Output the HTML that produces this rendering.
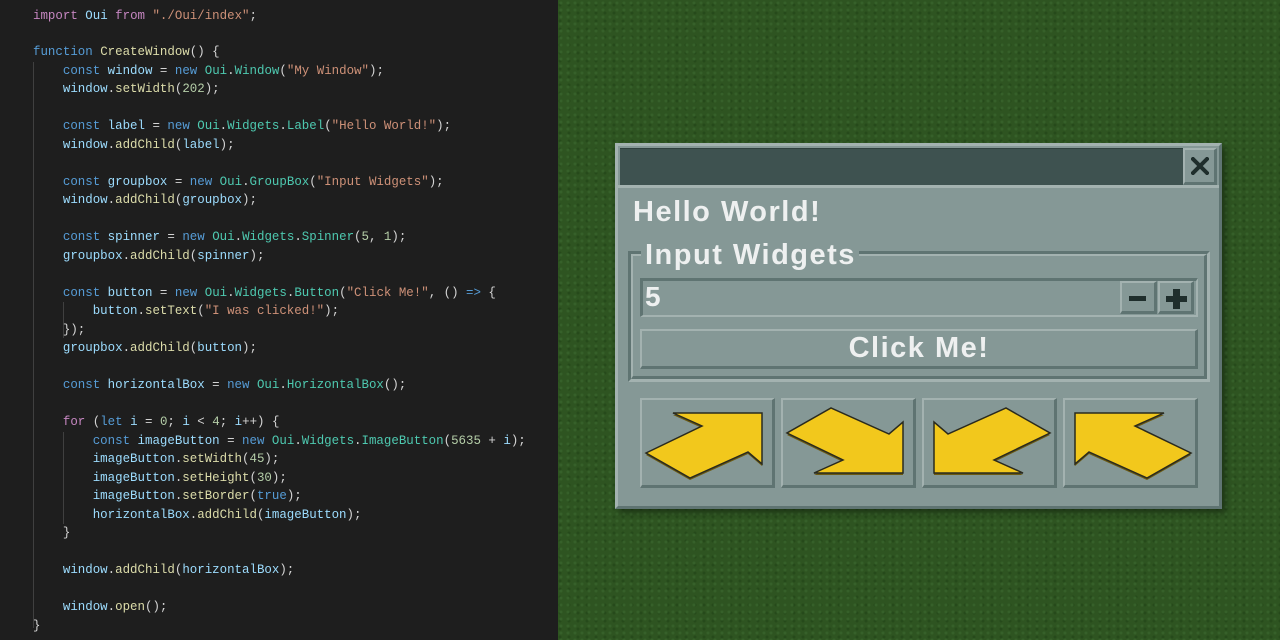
<!DOCTYPE html>
<html><head><meta charset="utf-8"><style>
*{margin:0;padding:0;box-sizing:border-box}
body{width:1280px;height:640px;overflow:hidden;background:#2f5622;position:relative;font-family:"Liberation Sans",sans-serif}
#grass{position:absolute;left:558px;top:0;width:722px;height:640px;background:
radial-gradient(circle at 3px 3px,#36602a 1px,transparent 2px) 0 0/7px 7px,
radial-gradient(circle at 2px 5px,#264a1b 1px,transparent 2px) 0 0/9px 8px,#2e5421}
#code{position:absolute;left:0;top:0;width:558px;height:640px;background:#1e1e1e;font-family:"Liberation Mono",monospace;font-size:12.45px;color:#d4d4d4;white-space:pre}
#code div{position:absolute;left:33px;height:18px;line-height:18px}
.k{color:#569cd6}.p{color:#c586c0}.v{color:#9cdcfe}.c{color:#4ec9b0}.f{color:#dcdcaa}.s{color:#ce9178}.n{color:#b5cea8}
.guide{position:absolute;width:1px;background:#404040}
.win{position:absolute;left:615px;top:143px;width:607px;height:366px;background:#859896;border-top:3px solid #a3b2b0;border-left:3px solid #a3b2b0;border-right:3px solid #5f7472;border-bottom:3px solid #5f7472;box-shadow:4px 4px 6px rgba(0,0,0,.35)}
.abs{position:absolute}
.t{color:#eef0f0;font-weight:bold;position:absolute;letter-spacing:1.5px}
.bev{position:absolute;border-top:2px solid #a3b2b0;border-left:2px solid #a3b2b0;border-right:3px solid #5f7472;border-bottom:3px solid #5f7472;background:#859896}
.inset{position:absolute;border-top:3px solid #5f7472;border-left:3px solid #5f7472;border-right:2px solid #a3b2b0;border-bottom:2px solid #a3b2b0;background:#859896}
</style></head><body>
<div id="grass"></div>
<div id="code">
<div class="guide" style="left:33px;top:62px;height:566px"></div>
<div class="guide" style="left:63px;top:302px;height:36px"></div>
<div class="guide" style="left:63px;top:432px;height:92px"></div>
<div style="top:7px"><span class="p">import</span> <span class="v">Oui</span> <span class="p">from</span> <span class="s">"./Oui/index"</span>;</div>
<div style="top:43px"><span class="k">function</span> <span class="f">CreateWindow</span>() {</div>
<div style="top:62px">    <span class="k">const</span> <span class="v">window</span> = <span class="k">new</span> <span class="c">Oui</span>.<span class="c">Window</span>(<span class="s">"My Window"</span>);</div>
<div style="top:80px">    <span class="v">window</span>.<span class="f">setWidth</span>(<span class="n">202</span>);</div>
<div style="top:117px">    <span class="k">const</span> <span class="v">label</span> = <span class="k">new</span> <span class="c">Oui</span>.<span class="c">Widgets</span>.<span class="c">Label</span>(<span class="s">"Hello World!"</span>);</div>
<div style="top:136px">    <span class="v">window</span>.<span class="f">addChild</span>(<span class="v">label</span>);</div>
<div style="top:173px">    <span class="k">const</span> <span class="v">groupbox</span> = <span class="k">new</span> <span class="c">Oui</span>.<span class="c">GroupBox</span>(<span class="s">"Input Widgets"</span>);</div>
<div style="top:191px">    <span class="v">window</span>.<span class="f">addChild</span>(<span class="v">groupbox</span>);</div>
<div style="top:228px">    <span class="k">const</span> <span class="v">spinner</span> = <span class="k">new</span> <span class="c">Oui</span>.<span class="c">Widgets</span>.<span class="c">Spinner</span>(<span class="n">5</span>, <span class="n">1</span>);</div>
<div style="top:247px">    <span class="v">groupbox</span>.<span class="f">addChild</span>(<span class="v">spinner</span>);</div>
<div style="top:284px">    <span class="k">const</span> <span class="v">button</span> = <span class="k">new</span> <span class="c">Oui</span>.<span class="c">Widgets</span>.<span class="c">Button</span>(<span class="s">"Click Me!"</span>, () <span class="k">=&gt;</span> {</div>
<div style="top:302px">        <span class="v">button</span>.<span class="f">setText</span>(<span class="s">"I was clicked!"</span>);</div>
<div style="top:321px">    });</div>
<div style="top:339px">    <span class="v">groupbox</span>.<span class="f">addChild</span>(<span class="v">button</span>);</div>
<div style="top:376px">    <span class="k">const</span> <span class="v">horizontalBox</span> = <span class="k">new</span> <span class="c">Oui</span>.<span class="c">HorizontalBox</span>();</div>
<div style="top:413px">    <span class="p">for</span> (<span class="k">let</span> <span class="v">i</span> = <span class="n">0</span>; <span class="v">i</span> &lt; <span class="n">4</span>; <span class="v">i</span>++) {</div>
<div style="top:432px">        <span class="k">const</span> <span class="v">imageButton</span> = <span class="k">new</span> <span class="c">Oui</span>.<span class="c">Widgets</span>.<span class="c">ImageButton</span>(<span class="n">5635</span> + <span class="v">i</span>);</div>
<div style="top:450px">        <span class="v">imageButton</span>.<span class="f">setWidth</span>(<span class="n">45</span>);</div>
<div style="top:469px">        <span class="v">imageButton</span>.<span class="f">setHeight</span>(<span class="n">30</span>);</div>
<div style="top:487px">        <span class="v">imageButton</span>.<span class="f">setBorder</span>(<span class="k">true</span>);</div>
<div style="top:506px">        <span class="v">horizontalBox</span>.<span class="f">addChild</span>(<span class="v">imageButton</span>);</div>
<div style="top:524px">    }</div>
<div style="top:561px">    <span class="v">window</span>.<span class="f">addChild</span>(<span class="v">horizontalBox</span>);</div>
<div style="top:598px">    <span class="v">window</span>.<span class="f">open</span>();</div>
<div style="top:617px">}</div>
</div>

<div class="win"></div>
<div class="abs" style="left:620px;top:148px;width:563px;height:37px;background:#3e5250;border-top:1px solid #2f403e"></div>
<div class="abs" style="left:618px;top:185px;width:601px;height:3px;background:#a3b2b0"></div>
<div class="bev" style="left:1183px;top:148px;width:34px;height:37px"></div>
<svg class="abs" style="left:1191px;top:157px" width="18" height="18" viewBox="0 0 18 18"><path d="M2 2L16 16M16 2L2 16" stroke="#1f2e2c" stroke-width="4" stroke-linecap="square"/></svg>

<div class="t" style="left:633px;top:195px;font-size:29px;line-height:34px">Hello World!</div>

<div class="abs" style="left:628px;top:251px;width:582px;height:131px;border-top:3px solid #5f7472;border-left:3px solid #5f7472;border-right:3px solid #a3b2b0;border-bottom:3px solid #a3b2b0"></div>
<div class="abs" style="left:631px;top:254px;width:576px;height:125px;border-top:2px solid #a3b2b0;border-left:2px solid #a3b2b0;border-right:3px solid #5f7472;border-bottom:3px solid #5f7472"></div>
<div class="t" style="left:641px;top:238px;font-size:29px;line-height:34px;background:#859896;padding:0 3px 0 4px">Input Widgets</div>

<div class="inset" style="left:640px;top:278px;width:558px;height:39px"></div>
<div class="t" style="left:645px;top:280px;font-size:28px;line-height:34px">5</div>
<div class="bev" style="left:1120px;top:281px;width:37px;height:33px"></div>
<div class="bev" style="left:1158px;top:281px;width:36px;height:33px"></div>
<div class="abs" style="left:1129px;top:296px;width:17px;height:5px;background:#1f2e2c"></div>
<div class="abs" style="left:1166px;top:296px;width:21px;height:6px;background:#1f2e2c"></div>
<div class="abs" style="left:1173px;top:289px;width:7px;height:20px;background:#1f2e2c"></div>

<div class="bev" style="left:640px;top:329px;width:558px;height:40px"></div>
<div class="t" style="left:640px;top:331px;width:558px;text-align:center;font-size:29px;line-height:34px">Click Me!</div>

<div class="bev" style="left:640px;top:398px;width:135px;height:90px"></div>
<div class="bev" style="left:781px;top:398px;width:135px;height:90px"></div>
<div class="bev" style="left:922px;top:398px;width:135px;height:90px"></div>
<div class="bev" style="left:1063px;top:398px;width:135px;height:90px"></div>
<svg class="abs" style="left:640px;top:398px" width="558" height="90">
<defs><polygon id="ar" points="33,15 122,15 122,66 108,54 50,80 6,55 62,28" /></defs>
<g><use href="#ar" fill="#6b5a12" transform="translate(0,2)"/><use href="#ar" fill="#f2c81c" stroke="#2a2a1e" stroke-width="1.5"/></g>
<g transform="translate(141,90) scale(1,-1)"><use href="#ar" fill="#6b5a12" transform="translate(0,-2)"/><use href="#ar" fill="#f2c81c" stroke="#2a2a1e" stroke-width="1.5"/></g>
<g transform="translate(416,90) scale(-1,-1)"><use href="#ar" fill="#6b5a12" transform="translate(0,-2)"/><use href="#ar" fill="#f2c81c" stroke="#2a2a1e" stroke-width="1.5"/></g>
<g transform="translate(557,0) scale(-1,1)"><use href="#ar" fill="#6b5a12" transform="translate(0,2)"/><use href="#ar" fill="#f2c81c" stroke="#2a2a1e" stroke-width="1.5"/></g>
</svg>
</body></html>
